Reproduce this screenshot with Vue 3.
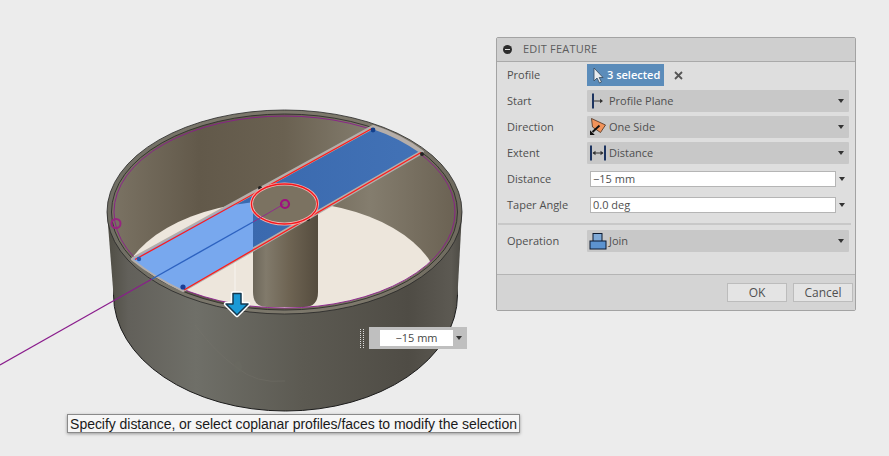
<script setup>
const tip = "Specify distance, or select coplanar profiles/faces to modify the selection"
</script>

<template>
  <div class="stage">
    <svg class="model" width="889" height="456" viewBox="0 0 889 456">
      <defs>
        <linearGradient id="outer" gradientUnits="userSpaceOnUse" x1="107" y1="0" x2="462" y2="0">
          <stop offset="0" stop-color="#4f4d44" />
          <stop offset="0.06" stop-color="#62605a" />
          <stop offset="0.25" stop-color="#6f6f68" />
          <stop offset="0.55" stop-color="#5c5a52" />
          <stop offset="0.85" stop-color="#4f4c45" />
          <stop offset="0.97" stop-color="#5c5952" />
          <stop offset="1" stop-color="#4c4a44" />
        </linearGradient>
        <linearGradient id="rim" gradientUnits="userSpaceOnUse" x1="107" y1="0" x2="462" y2="0">
          <stop offset="0" stop-color="#6f6d63" />
          <stop offset="0.3" stop-color="#7b776b" />
          <stop offset="0.7" stop-color="#7d786b" />
          <stop offset="1" stop-color="#6e6a5e" />
        </linearGradient>
        <linearGradient id="wall" gradientUnits="userSpaceOnUse" x1="114" y1="0" x2="455" y2="0">
          <stop offset="0" stop-color="#7a7263" />
          <stop offset="0.25" stop-color="#62594a" />
          <stop offset="0.5" stop-color="#6a6151" />
          <stop offset="0.75" stop-color="#847d6e" />
          <stop offset="1" stop-color="#6b6253" />
        </linearGradient>
        <linearGradient id="pole" gradientUnits="userSpaceOnUse" x1="253" y1="0" x2="318" y2="0">
          <stop offset="0" stop-color="#6c6659" />
          <stop offset="0.2" stop-color="#817a6b" />
          <stop offset="0.55" stop-color="#6e6453" />
          <stop offset="1" stop-color="#554c3e" />
        </linearGradient>
        <linearGradient id="band" gradientUnits="userSpaceOnUse" x1="250" y1="0" x2="420" y2="0">
          <stop offset="0" stop-color="#3a69ae" />
          <stop offset="1" stop-color="#4272b6" />
        </linearGradient>
        <clipPath id="inner"><ellipse cx="284.5" cy="212" rx="171" ry="96" /></clipPath>
        <clipPath id="floorLeft">
          <path d="M100 150H253V320H100Z" />
        </clipPath>
        <clipPath id="floorShape"><ellipse cx="280" cy="293" rx="160" ry="92" /></clipPath>
      </defs>

      <!-- outer body -->
      <ellipse cx="285.5" cy="295" rx="172" ry="116" fill="url(#outer)" stroke="#1c1c1c" stroke-width="1" />
      <path d="M107 212L113.500 295H457.500L462 212Z" fill="url(#outer)" />
      <ellipse cx="284.5" cy="212" rx="177.5" ry="102" fill="url(#rim)" stroke="#262626" stroke-width="0.8" />

      <!-- faint edges on the side -->
      <path d="M195 325Q215 352 236 367Q256 384 285 381" fill="none" stroke="#77766e" stroke-width="0.7" opacity="0.5" />
      <ellipse cx="238" cy="367" rx="4" ry="6" fill="#6a6961" opacity="0.7" />

      <!-- inside -->
      <ellipse cx="284.5" cy="212" rx="173" ry="98" fill="url(#wall)" stroke="#262626" stroke-width="0.8" />
      <g clip-path="url(#inner)">
        <ellipse cx="280" cy="293" rx="160" ry="92" fill="#ede6dc" />
        <path d="M253 204V292Q253 307 267 307H304Q318 307 318 292V204Z" fill="url(#pole)" />
      </g>
      <ellipse cx="284.5" cy="212" rx="170.500" ry="96" fill="none" stroke="#8a1c8c" stroke-width="0.9" />
      <path d="M235 262V292" stroke="#fff" stroke-width="1" opacity="0.6" />
      <text class="ghost" x="218" y="260">15.00</text>

      <!-- selected band -->
      <path d="M133 259L373 127Q400 136 422 152L183 290Q155 277 133 259Z" fill="url(#band)" stroke="#b5aeaa" stroke-width="4" stroke-linejoin="round" />
      <g clip-path="url(#floorShape)">
        <path d="M133 259L373 127Q400 136 422 152L183 290Q155 277 133 259Z" fill="#78a8ee" clip-path="url(#floorLeft)" />
      </g>
      <path d="M135 259.500L372 128.500M184 290L421 152.500" fill="none" stroke="#ff1a1a" stroke-width="1.300" />
      <circle cx="373" cy="130" r="2.400" fill="#123f8c" />
      <circle cx="183" cy="287" r="2.600" fill="#1c3f95" />
      <circle cx="139" cy="259" r="2.200" fill="#2a58ad" />
      <circle cx="422" cy="154" r="2" fill="#222" />
      <circle cx="260" cy="188" r="2" fill="#222" />
      <circle cx="308" cy="219" r="2" fill="#222" />

      <!-- top of the pole -->
      <ellipse cx="284.5" cy="204" rx="33" ry="20" fill="#7b7261" stroke="#f0b4b0" stroke-width="3" />
      <ellipse cx="284.5" cy="204" rx="33" ry="20" fill="none" stroke="#f3161c" stroke-width="1.300" />

      <!-- sketch line -->
      <path d="M0 365L152 279" stroke="#8a1c8c" stroke-width="1.100" />
      <path d="M152 279L253 222" stroke="#2d62c0" stroke-width="1.400" />
      <path d="M253 222L284 204" stroke="#8f2d8c" stroke-width="1" />
      <circle cx="285" cy="204" r="4" fill="none" stroke="#a0107e" stroke-width="2.200" />
      <circle cx="116" cy="223.500" r="4.500" fill="none" stroke="#97247f" stroke-width="2" />

      <!-- arrow -->
      <path d="M233 293.500H241V304H248L237 315L226 304H233Z" fill="#1b9ad6" stroke="#fff" stroke-width="4.500" stroke-linejoin="round" />
      <path d="M233 293.500H241V304H248L237 315L226 304H233Z" fill="#1b9ad6" stroke="#14384f" stroke-width="1.500" stroke-linejoin="round" />
    </svg>

    <div class="panel">
      <div class="head">
        <span class="minus"></span>
        <span class="title">EDIT FEATURE</span>
      </div>
      <div class="body">
        <div class="row">
          <label>Profile</label>
          <div class="picked">
            <svg width="12" height="17" viewBox="0 0 12 17">
              <path d="M2 1V14L5 11L7.500 16L9.500 15L7.200 10.500H11Z" fill="#e8ecef" stroke="#33475a" stroke-width="0.8" />
            </svg>
            <span class="text">3 selected</span>
          </div>
          <svg class="clear" width="9" height="9" viewBox="0 0 9 9">
            <path d="M1 1L8 8M8 1L1 8" stroke="#555" stroke-width="1.800" />
          </svg>
        </div>
        <div class="row">
          <label>Start</label>
          <div class="select">
            <svg class="ico" width="18" height="18" viewBox="0 0 18 18">
              <path d="M4 1.500V16.500" stroke="#1d3460" stroke-width="2" />
              <path d="M5 9H13" stroke="#333" stroke-width="1" />
              <path d="M11 6.800L14 9L11 11.200Z" fill="#333" />
            </svg>
            <span class="value">Profile Plane</span>
            <i class="caret"></i>
          </div>
        </div>
        <div class="row">
          <label>Direction</label>
          <div class="select">
            <svg class="ico" width="18" height="18" viewBox="0 0 18 18">
              <path d="M2.500 0.500L16.500 7L11.500 14.500L3.500 9Z" fill="#f2935a" stroke="#4a3020" stroke-width="0.8" />
              <path d="M10.500 7.500L3.500 14" stroke="#111" stroke-width="1.800" />
              <path d="M1 17V12.200L5.800 17Z" fill="#111" />
            </svg>
            <span class="value">One Side</span>
            <i class="caret"></i>
          </div>
        </div>
        <div class="row">
          <label>Extent</label>
          <div class="select">
            <svg class="ico" width="18" height="18" viewBox="0 0 18 18">
              <path d="M2 1.500V16.500M16 1.500V16.500" stroke="#1d3460" stroke-width="2" />
              <path d="M4 9H14" stroke="#333" stroke-width="1" />
              <path d="M6.500 6.800L3.500 9L6.500 11.200ZM11.500 6.800L14.500 9L11.500 11.200Z" fill="#333" />
            </svg>
            <span class="value">Distance</span>
            <i class="caret"></i>
          </div>
        </div>
        <div class="row">
          <label>Distance</label>
          <input class="field" value="−15 mm" readonly />
          <i class="caret loose"></i>
        </div>
        <div class="row">
          <label>Taper Angle</label>
          <input class="field" value="0.0 deg" readonly />
          <i class="caret loose"></i>
        </div>
        <div class="rule"></div>
        <div class="row">
          <label>Operation</label>
          <div class="select">
            <svg class="ico" width="18" height="18" viewBox="0 0 18 18">
              <rect x="4" y="1.500" width="9" height="9" fill="#7fa9d6" stroke="#0c1a30" stroke-width="1" />
              <rect x="1" y="9" width="16" height="8" fill="#5c93cf" stroke="#0c1a30" stroke-width="1" />
            </svg>
            <span class="value">Join</span>
            <i class="caret"></i>
          </div>
        </div>
      </div>
      <div class="foot">
        <button>OK</button>
        <button>Cancel</button>
      </div>
    </div>

    <div class="grip"></div>
    <div class="mini">
      <div class="mini-input">−15 mm</div>
      <i class="caret"></i>
    </div>

    <div class="tip">{{ tip }}</div>
  </div>
</template>

<style>
html, body {
  margin: 0;
  background: #ececec;
}
</style>

<style scoped>
.stage {
  position: relative;
  width: 889px;
  height: 456px;
  overflow: hidden;
  background: #ececec;
  font-family: "Open Sans", "DejaVu Sans", sans-serif;
  font-size: 11px;
  color: #4f4f4f;
}
.model {
  position: absolute;
  left: 0;
  top: 0;
}
.ghost {
  font-family: "Liberation Sans", sans-serif;
  font-size: 12px;
  fill: #fff;
  opacity: 0.18;
}
.panel {
  position: absolute;
  left: 496px;
  top: 37px;
  width: 358px;
  height: 272px;
  display: flex;
  flex-direction: column;
  background: #dedede;
  border: 1px solid #a3a3a3;
  border-radius: 2px;
}
.head {
  height: 23px;
  display: flex;
  align-items: center;
  gap: 11px;
  padding-left: 6px;
  background: #cfcfcf;
  border-bottom: 1px solid #a9a9a9;
  color: #5c5c5c;
  letter-spacing: 0.2px;
}
.title {
  padding-bottom: 2px;
}
.minus {
  width: 9px;
  height: 9px;
  border-radius: 50%;
  background: #2b2b2b;
  position: relative;
}
.minus::after {
  content: "";
  position: absolute;
  left: 2px;
  top: 4px;
  width: 5px;
  height: 1px;
  background: #ddd;
}
.body {
  flex: 1;
  display: flex;
  flex-direction: column;
  gap: 4px;
  padding: 2px 0 0 10px;
}
.row {
  height: 22px;
  display: flex;
  align-items: center;
}
.row label {
  width: 80px;
  flex: none;
  padding-bottom: 2px;
}
.select {
  width: 262px;
  height: 22px;
  display: flex;
  align-items: center;
  background: #c8c8c8;
  border-radius: 1px;
  position: relative;
}
.ico {
  margin-left: 2px;
  flex: none;
}
.value {
  margin-left: 2px;
  padding-bottom: 2px;
  color: #4f4f4f;
}
.caret {
  position: absolute;
  right: 5px;
  top: 9px;
  width: 0;
  height: 0;
  border-left: 3.500px solid transparent;
  border-right: 3.500px solid transparent;
  border-top: 4px solid #333;
}
.caret.loose {
  position: static;
  margin-left: 3px;
}
.picked {
  width: 77px;
  height: 22px;
  display: flex;
  align-items: center;
  gap: 3px;
  padding-left: 5px;
  box-sizing: border-box;
  background: #5b8cba;
  color: #fff;
  font-weight: 600;
}
.text {
  padding-bottom: 2px;
}
.clear {
  margin-left: 10px;
}
.field {
  width: 246px;
  height: 16px;
  margin-left: 3px;
  padding: 0 0 2px 2px;
  box-sizing: border-box;
  border: 1px solid #b5b5b5;
  background: #fff;
  font: inherit;
  color: #4f4f4f;
  outline: none;
}
.rule {
  height: 2px;
  margin: 3px 4px 1px -9px;
  background: #c8c8c8;
}
.foot {
  height: 35px;
  display: flex;
  align-items: center;
  justify-content: flex-end;
  gap: 6px;
  padding-right: 2px;
  background: #d4d4d4;
  border-top: 1px solid #b4b4b4;
}
.foot button {
  width: 60px;
  height: 19px;
  padding: 0 0 2px;
  background: #e4e4e4;
  border: 1px solid #bcbcbc;
  font: inherit;
  font-size: 12px;
  color: #505050;
}
.grip {
  position: absolute;
  left: 360px;
  top: 329px;
  width: 2px;
  height: 19px;
  border-left: 1px dotted #ddd;
  border-right: 1px dotted #ddd;
}
.mini {
  position: absolute;
  left: 369px;
  top: 327px;
  width: 98px;
  height: 22px;
  background: #bfbfbf;
}
.mini-input {
  position: absolute;
  left: 11px;
  top: 3px;
  width: 73px;
  height: 16px;
  background: #fff;
  text-align: center;
  line-height: 15px;
  color: #474747;
}
.tip {
  position: absolute;
  left: 67px;
  top: 414px;
  height: 19px;
  width: 453px;
  box-sizing: border-box;
  line-height: 18px;
  text-align: center;
  white-space: nowrap;
  font-family: "Liberation Sans", sans-serif;
  font-size: 14px;
  letter-spacing: -0.04px;
  color: #1a1a1a;
  background: #f6f6f6;
  border: 1px solid #8a8a8a;
  box-shadow: 0 1px 3px rgba(0, 0, 0, 0.35);
}
</style>
